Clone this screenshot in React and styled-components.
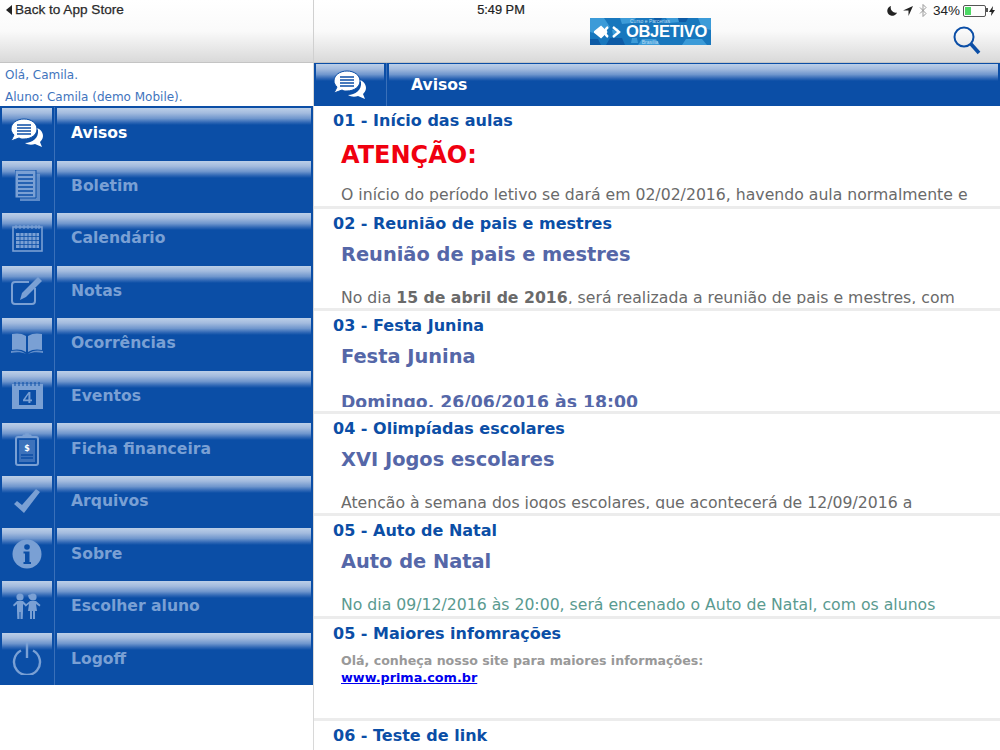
import styled, { createGlobalStyle } from "styled-components";

const GlobalStyle = createGlobalStyle`
  html, body {
    margin: 0;
    height: 100%;
    overflow: hidden;
    background: #fff;
  }
  #root {
    height: 750px;
  }
`;

const Page = styled.div`
  width: 1000px;
  height: 750px;
  display: grid;
  grid-template-columns: 314px 1fr;
  grid-template-rows: 63px 1fr;
  font-family: "DejaVu Sans", Verdana, sans-serif;
  overflow: hidden;
`;

const TopBar = styled.header`
  height: 63px;
  box-sizing: border-box;
  background: linear-gradient(#fff 0, #fafafa 50%, #d9d9d9 100%);
  border-bottom: 1px solid #c4c4c4;
  border-right: ${(p) => (p.$left ? "1px solid #d0d0d0" : "none")};
  font-family: "Liberation Sans", Arial, sans-serif;
  font-size: 12px;
  color: #222;
  position: relative;
`;

const BackLink = styled.div`
  display: flex;
  align-items: center;
  gap: 3px;
  padding: 2px 0 0 6px;
  font-size: 13.6px;
  color: #2a2a2a;
  -webkit-text-stroke: 0.25px #2a2a2a;
`;

const Clock = styled.div`
  position: absolute;
  top: 2px;
  left: 0;
  width: 374px;
  text-align: center;
  font-size: 12.8px;
  -webkit-text-stroke: 0.2px #222;
`;

const StatusIcons = styled.div`
  position: absolute;
  top: 3px;
  right: 5px;
  display: flex;
  align-items: center;
  gap: 6px;
  font-size: 13.5px;
  height: 15px;
`;

const Battery = styled.div`
  width: 19px;
  height: 8px;
  border: 1px solid #555;
  border-radius: 2px;
  padding: 1px;
  margin-left: -3px;
  margin-right: -3px;
  display: flex;
  position: relative;
  & > div {
    width: 34%;
    background: #4cd964;
  }
  &::after {
    content: "";
    position: absolute;
    top: 2px;
    right: -3px;
    width: 2px;
    height: 4px;
    background: #555;
  }
`;

const LogoWrap = styled.div`
  position: absolute;
  top: 18px;
  left: 276px;
  width: 121px;
  height: 27px;
  display: flex;
  align-items: center;
  justify-content: center;
  gap: 3px;
  background: #1877bd;
  overflow: hidden;
`;

const LogoPattern = styled.svg`
  position: absolute;
  inset: 0;
`;

const LogoMark = styled.svg`
  position: relative;
  flex: none;
`;

const LogoText = styled.span`
  position: relative;
  font-family: "Liberation Sans", Arial, sans-serif;
  font-weight: 700;
  font-size: 16.5px;
  letter-spacing: -0.3px;
  color: #fff;
`;

const LogoCaption = styled.span`
  position: absolute;
  left: 30px;
  width: 60px;
  text-align: center;
  top: ${(p) => (p.$bottom ? "21px" : "0")};
  font-family: "Liberation Sans", Arial, sans-serif;
  font-size: 5px;
  line-height: 6px;
  color: #bcdcf2;
`;

const SearchButton = styled.div`
  position: absolute;
  top: 26px;
  right: 19px;
  width: 28px;
  height: 30px;
`;

const Sidebar = styled.aside`
  display: flex;
  flex-direction: column;
  border-right: 1px solid #d8d8d8;
  background: #fff;
`;

const Greeting = styled.div`
  height: 43px;
  box-sizing: border-box;
  padding: 1px 5px 0;
  font-size: 12px;
  line-height: 22px;
  color: #3f74bd;
`;

const Menu = styled.nav`
  height: 579px;
  display: grid;
  grid-template-rows: repeat(11, 1fr);
  background: #0b4ea6;
  border-top: 1px solid #0b4ea6;
  box-sizing: border-box;
`;

const gloss = `linear-gradient(#bccfe8 0, #a3bbde 30%, #6f96cd 62%, #2f67b5 85%, #0b4ea6 100%)`;

const MenuRow = styled.div`
  display: grid;
  grid-template-columns: 55px 1fr;
  color: ${(p) => (p.$active ? "#fff" : "#7aa0d4")};
`;

const Cell = styled.div`
  position: relative;
  display: flex;
  align-items: center;
  min-width: 0;
  height: 100%;
  &::before {
    content: "";
    position: absolute;
    top: 1px;
    left: 2px;
    right: 2px;
    height: 17px;
    background: ${gloss};
  }
  border-right: ${(p) => (p.$icon ? "1px solid #3a70b9" : "none")};
`;

const IconCell = styled(Cell)`
  justify-content: center;
  & > svg {
    position: relative;
  }
`;

const Label = styled.span`
  position: relative;
  padding-left: 16px;
  font-size: 15.6px;
  font-weight: 700;
`;

const Main = styled.main`
  display: flex;
  flex-direction: column;
  min-width: 0;
`;

const PanelHeader = styled.div`
  flex: none;
  height: 43px;
  background: #0b4ea6;
  display: grid;
  grid-template-columns: 73px 1fr;
  color: #fff;
`;

const PanelLabel = styled(Label)`
  padding-left: 24px;
`;

const Notices = styled.div`
  flex: 1;
  min-height: 0;
  overflow: hidden;
`;

const Notice = styled.article`
  height: 102.5px;
  box-sizing: border-box;
  padding: 0 0 4px 19px;
  border-bottom: 3px solid #ececec;
`;

const NoticeClip = styled.div`
  height: 100%;
  overflow: hidden;
`;

const NoticeTitle = styled.h2`
  margin: 0;
  padding-top: 5px;
  font-size: 16px;
  line-height: 20px;
  font-weight: 700;
  color: #0b4ea6;
`;

const NoticeBody = styled.div`
  padding: 0 8px;
`;

const Heading = styled.h3`
  margin: ${(p) => (p.$alert ? "9px 0 15px" : "6px 0 18px")};
  font-size: ${(p) => (p.$alert ? "24px" : "19.4px")};
  line-height: 30px;
  font-weight: 700;
  color: ${(p) => (p.$alert ? "#f0000f" : "#5567a8")};
`;

const SubHeading = styled.h4`
  margin: 3px 0 0;
  font-size: 17.3px;
  line-height: 24px;
  font-weight: 700;
  color: #5567a8;
`;

const Text = styled.p`
  margin: 0;
  font-size: 15.7px;
  line-height: 20px;
  color: ${(p) => (p.$teal ? "#5a9a90" : "#6a6a6a")};
  white-space: nowrap;
`;

const Small = styled.p`
  margin: 8px 0 0;
  font-size: 12.6px;
  line-height: 17px;
  font-weight: 700;
  color: #999;
  & a {
    color: #0000ee;
    display: block;
    font-size: 12.8px;
  }
`;

const ChatIcon = () => (
  <svg width="34" height="30" viewBox="0 0 34 30" fill="currentColor">
    <path d="M24 9c5 1 9 4 9 9 0 3-2 5-3 6l2 5-7-3c-3 1-7 1-10-1 7 0 14-5 13-13z" />
    <path d="M14 1c7 0 13 4 13 10s-6 10-13 10c-2 0-3 0-5-1l-8 3 3-6C2 15 1 13 1 11 1 5 7 1 14 1z" stroke="#0b4ea6" strokeWidth="1" />
    <path d="M7 7h14M7 10h14M7 13h14M7 16h14" stroke="#0b4ea6" strokeWidth="1.4" />
  </svg>
);

const BookletIcon = () => (
  <svg width="25" height="31" viewBox="0 0 25 31" fill="currentColor">
    <path d="M5 4h20v27H5z" opacity=".75" />
    <path d="M0 0h21v28H0z" stroke="#0b4ea6" />
    <path d="M3 5h15M3 9h15M3 13h15M3 17h15M3 21h15M3 25h15" stroke="#0b4ea6" strokeWidth="1.3" />
  </svg>
);

const CalendarIcon = () => (
  <svg width="31" height="28" viewBox="0 0 31 28" fill="none" stroke="currentColor">
    <rect x="1" y="3" width="29" height="24" strokeWidth="1.6" />
    <path d="M4 1v4M8 1v4M12 1v4M16 1v4M20 1v4M24 1v4M27 1v4" strokeWidth="1.2" />
    <path d="M4 9h23v15H4z" fill="currentColor" stroke="none" />
    <path d="M4 12.5h23M4 16.5h23M4 20.5h23M8 9v15M12 9v15M16 9v15M20 9v15M24 9v15" stroke="#0b4ea6" strokeWidth=".8" />
  </svg>
);

const NoteIcon = () => (
  <svg width="34" height="30" viewBox="0 0 34 30" fill="none" stroke="currentColor">
    <path d="M25 12v13a3 3 0 0 1-3 3H5a3 3 0 0 1-3-3V9a3 3 0 0 1 3-3h14" strokeWidth="2" />
    <path d="M28 1l4 4-16 16-6 3 2-7z" fill="currentColor" stroke="none" />
  </svg>
);

const BookIcon = () => (
  <svg width="32" height="21" viewBox="0 0 32 21" fill="currentColor">
    <path d="M15 3C11 0 5 0 1 1v16c4-1 10-1 14 2z" />
    <path d="M17 3c4-3 10-3 14-2v16c-4-1-10-1-14 2z" />
    <path d="M0 18c5-1 11-1 15 3h2c4-4 10-4 15-3v2c-5-1-11-1-15 1h-2c-4-2-10-2-15-1z" opacity=".8" />
  </svg>
);

const EventIcon = () => (
  <svg width="31" height="27" viewBox="0 0 31 27" fill="currentColor">
    <path d="M0 2h31v25H0z" />
    <path d="M3 0v4M7 0v4M11 0v4M15 0v4M19 0v4M23 0v4M27 0v4" stroke="#0b4ea6" />
    <rect x="7" y="8" width="17" height="15" fill="#0b4ea6" />
    <path d="M16.6 10h1.8v7.6h1.6v1.6h-1.6V21h-2v-1.8H11v-1.5zM16.4 12.6l-3.3 5h3.3z" />
  </svg>
);

const BillIcon = () => (
  <svg width="24" height="34" viewBox="0 0 24 34" fill="none" stroke="currentColor">
    <rect x="1" y="5" width="22" height="28" rx="2" strokeWidth="2" />
    <path d="M8 5V3h2a2 2 0 0 1 4 0h2v2z" fill="currentColor" />
    <rect x="4" y="8" width="16" height="22" fill="currentColor" stroke="none" opacity=".45" />
    <text x="12" y="19" fontSize="8" fontWeight="700" textAnchor="middle" fill="#fff" stroke="none">$</text>
    <path d="M6 23h12M6 26h12" strokeWidth="1.4" stroke="#0b4ea6" />
  </svg>
);

const CheckIcon = () => (
  <svg width="26" height="24" viewBox="0 0 26 24" fill="currentColor">
    <path d="M0 15l3-3 5 4L22 0l4 3L10 24z" />
  </svg>
);

const InfoIcon = () => (
  <svg width="30" height="30" viewBox="0 0 30 30" fill="currentColor">
    <circle cx="15" cy="15" r="14.5" />
    <circle cx="15" cy="8" r="2.8" fill="#0b4ea6" />
    <path d="M11.5 12.5H17.5V23H19V25H11.5V23H13V14.5H11.5z" fill="#0b4ea6" />
  </svg>
);

const KidsIcon = () => (
  <svg width="28" height="26" viewBox="0 0 28 26" fill="currentColor">
    <circle cx="7" cy="4" r="3.6" />
    <path d="M4 8h6l4 4-1 1.500-3-2.500V18l-.3 8H7.500V19h-1v7H4.300L4 18v-7l-3 2.500L0 12z" />
    <circle cx="20" cy="4" r="3.6" />
    <path d="M15 2.500a2 2 0 1 1 1 3z" />
    <path d="M17 8h6l4.500 4-1 1.500-3.500-2.500 1 7h-2v8h-2v-8h-1v8h-2v-8h-2l1-7-3.500 2.500-.5-1.500z" />
  </svg>
);

const PowerIcon = () => (
  <svg width="30" height="33" viewBox="0 0 30 33" fill="none" stroke="currentColor" strokeWidth="2.4">
    <path d="M9 8.500a13 13 0 1 0 12 0" />
    <path d="M15 0v16" />
  </svg>
);

const menuItems = [
  { label: "Avisos", icon: <ChatIcon />, active: true },
  { label: "Boletim", icon: <BookletIcon /> },
  { label: "Calendário", icon: <CalendarIcon /> },
  { label: "Notas", icon: <NoteIcon /> },
  { label: "Ocorrências", icon: <BookIcon /> },
  { label: "Eventos", icon: <EventIcon /> },
  { label: "Ficha financeira", icon: <BillIcon /> },
  { label: "Arquivos", icon: <CheckIcon /> },
  { label: "Sobre", icon: <InfoIcon /> },
  { label: "Escolher aluno", icon: <KidsIcon /> },
  { label: "Logoff", icon: <PowerIcon /> },
];

export default function App() {
  return (
    <Page>
      <GlobalStyle />
      <TopBar $left>
        <BackLink>
          <svg width="6" height="10" viewBox="0 0 6 10" fill="#222">
            <path d="M6 0v10L0 5z" />
          </svg>
          Back to App Store
        </BackLink>
      </TopBar>
      <TopBar>
        <Clock>5:49 PM</Clock>
        <StatusIcons>
          <svg width="10" height="10" viewBox="0 0 10 10" fill="#222">
            <path d="M4 0a5 5 0 1 0 6 6.500A5 5 0 0 1 4 0z" />
          </svg>
          <svg width="10" height="10" viewBox="0 0 10 10" fill="#222">
            <path d="M10 0L5.500 10V4.500H0z" />
          </svg>
          <svg width="8" height="13" viewBox="0 0 8 13" fill="none" stroke="#999">
            <path d="M1 3.500l6 6-3 3V.500l3 3-6 6" />
          </svg>
          <span>34%</span>
          <Battery>
            <div />
          </Battery>
          <svg width="6" height="10" viewBox="0 0 6 10" fill="#222">
            <path d="M4 0L0 6h2.500L2 10l4-6H3.500z" />
          </svg>
        </StatusIcons>
        <LogoWrap>
          <LogoPattern width="121" height="27" viewBox="0 0 121 27" fill="#3c9bd8">
            <path d="M0 0h14l6 9-9 8-11-3zM30 0h16l-4 5-10 1zM52 21h14l4 6H48zM76 0h12l3 4-12 1zM96 21h16l5 6H92zM108 0h13v12l-9-2zM22 12l6-2 2 6-7 1zM42 20h5l1 5h-7z" />
            <path d="M20 20h12l3 7H16zM64 0h8l-2 4h-5zM0 21h8l3 6H0zM88 0h10l-2 4h-7z" fill="#0d5aa5" />
          </LogoPattern>
          <LogoCaption>Curso e Parcerias</LogoCaption>
          <LogoMark width="29" height="16" viewBox="0 0 29 16" fill="none" stroke="#fff" strokeWidth="2.4">
            <path d="M1 8l6-5 5 5-5 5z" fill="#fff" />
            <path d="M14 3a6 6 0 0 0 0 10M19 3l6 5-6 5" />
          </LogoMark>
          <LogoText>OBJETIVO</LogoText>
          <LogoCaption $bottom>Brasília</LogoCaption>
        </LogoWrap>
        <SearchButton>
          <svg width="28" height="30" viewBox="0 0 28 30" fill="none" stroke="#0b4ea6">
            <circle cx="11" cy="11" r="9.500" strokeWidth="2" />
            <path d="M18 18l8 9" strokeWidth="3.600" />
          </svg>
        </SearchButton>
      </TopBar>
      <Sidebar>
        <Greeting>
          Olá, Camila.
          <br />
          Aluno: Camila (demo Mobile).
        </Greeting>
        <Menu>
          {menuItems.map((item) => (
            <MenuRow key={item.label} $active={item.active}>
              <IconCell $icon>{item.icon}</IconCell>
              <Cell>
                <Label>{item.label}</Label>
              </Cell>
            </MenuRow>
          ))}
        </Menu>
      </Sidebar>
      <Main>
        <PanelHeader>
          <IconCell $icon>
            <ChatIcon />
          </IconCell>
          <Cell>
            <PanelLabel>Avisos</PanelLabel>
          </Cell>
        </PanelHeader>
        <Notices>
          <Notice>
            <NoticeClip>
              <NoticeTitle>01 - Início das aulas</NoticeTitle>
              <NoticeBody>
                <Heading $alert>ATENÇÃO:</Heading>
                <Text>O início do período letivo se dará em 02/02/2016, havendo aula normalmente e</Text>
              </NoticeBody>
            </NoticeClip>
          </Notice>
          <Notice>
            <NoticeClip>
              <NoticeTitle>02 - Reunião de pais e mestres</NoticeTitle>
              <NoticeBody>
                <Heading>Reunião de pais e mestres</Heading>
                <Text>
                  No dia <b>15 de abril de 2016</b>, será realizada a reunião de pais e mestres, com
                </Text>
              </NoticeBody>
            </NoticeClip>
          </Notice>
          <Notice>
            <NoticeClip>
              <NoticeTitle>03 - Festa Junina</NoticeTitle>
              <NoticeBody>
                <Heading>Festa Junina</Heading>
                <SubHeading>Domingo, 26/06/2016 às 18:00</SubHeading>
              </NoticeBody>
            </NoticeClip>
          </Notice>
          <Notice>
            <NoticeClip>
              <NoticeTitle>04 - Olimpíadas escolares</NoticeTitle>
              <NoticeBody>
                <Heading>XVI Jogos escolares</Heading>
                <Text>Atenção à semana dos jogos escolares, que acontecerá de 12/09/2016 a</Text>
              </NoticeBody>
            </NoticeClip>
          </Notice>
          <Notice>
            <NoticeClip>
              <NoticeTitle>05 - Auto de Natal</NoticeTitle>
              <NoticeBody>
                <Heading>Auto de Natal</Heading>
                <Text $teal>No dia 09/12/2016 às 20:00, será encenado o Auto de Natal, com os alunos</Text>
              </NoticeBody>
            </NoticeClip>
          </Notice>
          <Notice>
            <NoticeClip>
              <NoticeTitle>05 - Maiores infomrações</NoticeTitle>
              <NoticeBody>
                <Small>
                  Olá, conheça nosso site para maiores informações:
                  <a href="#site">www.prima.com.br</a>
                </Small>
              </NoticeBody>
            </NoticeClip>
          </Notice>
          <Notice>
            <NoticeClip>
              <NoticeTitle>06 - Teste de link</NoticeTitle>
            </NoticeClip>
          </Notice>
        </Notices>
      </Main>
    </Page>
  );
}
